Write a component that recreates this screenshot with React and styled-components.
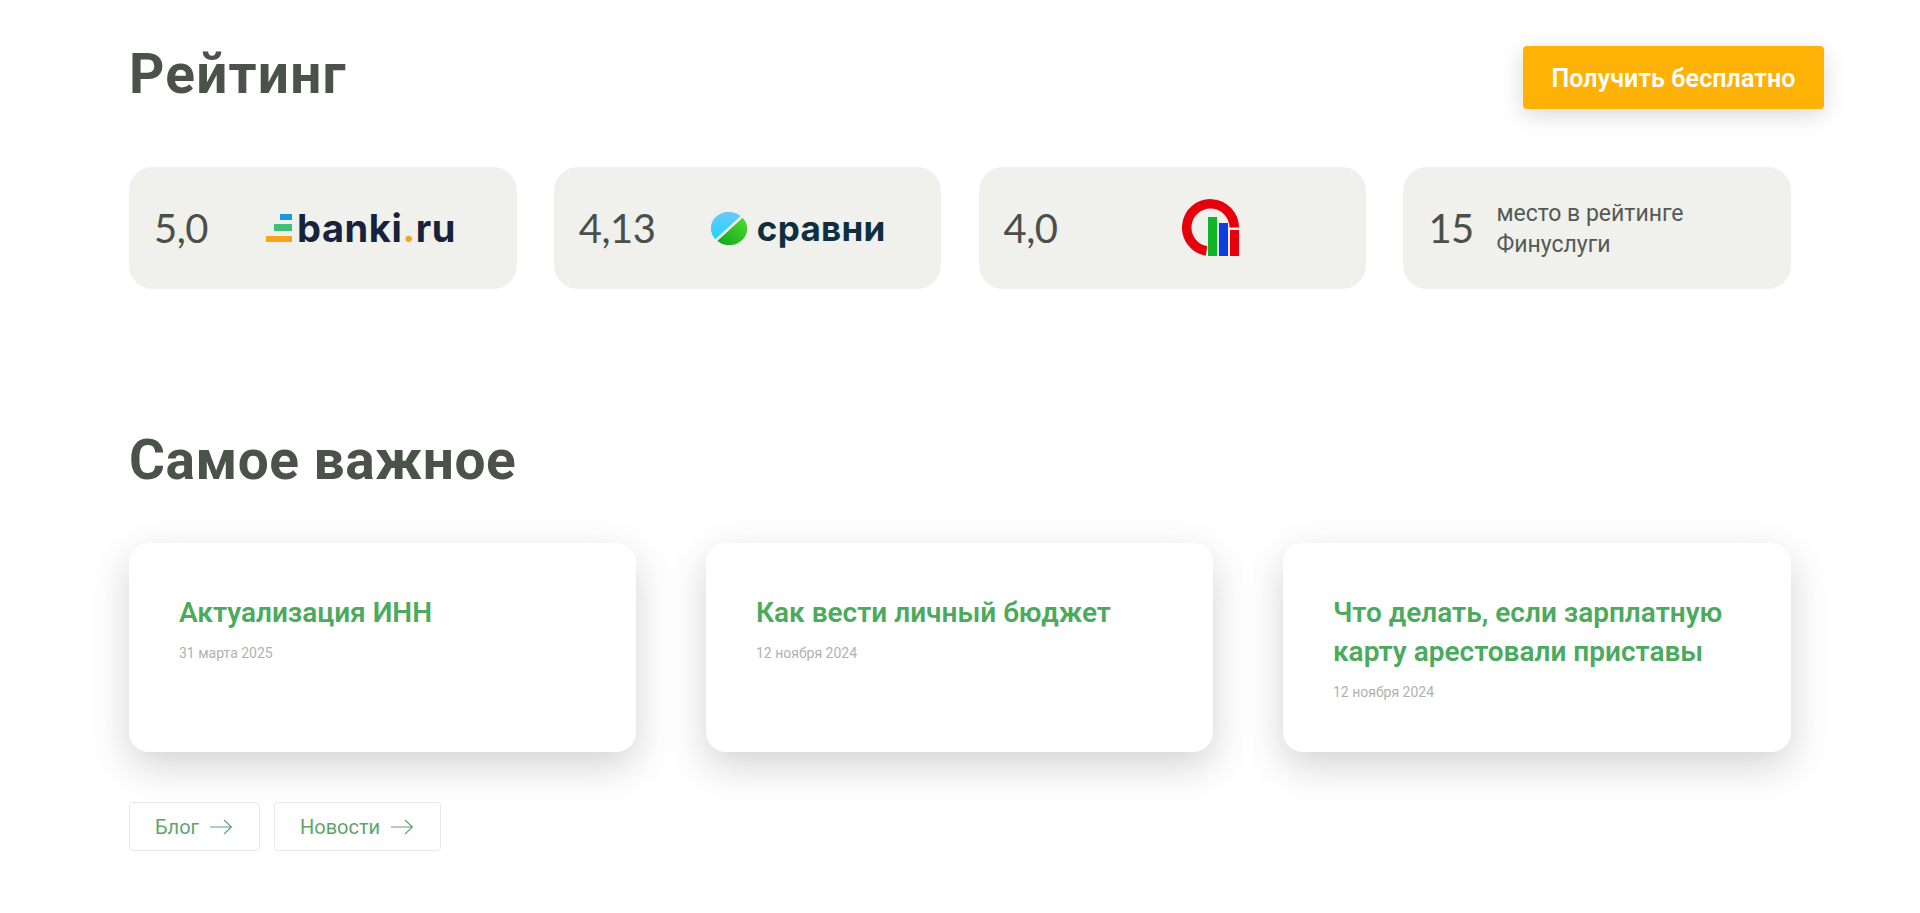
import React from "react";
import styled, { createGlobalStyle } from "styled-components";

const Global = createGlobalStyle`
  html, body {
    margin: 0;
    padding: 0;
    background: #fff;
    font-family: "Roboto", "Noto Sans", sans-serif;
  }
`;

const Page = styled.div`
  width: 1920px;
  height: 913px;
  padding: 46px 129px 0;
  box-sizing: border-box;
  overflow: hidden;
`;

const Header = styled.div`
  display: flex;
  align-items: flex-start;
  justify-content: space-between;
  height: 121px;
  margin-right: -33px;
`;

const Title = styled.h2`
  margin: 0;
  font-size: 55px;
  line-height: 56px;
  font-weight: 700;
  color: #4a5249;
  letter-spacing: ${(p) => p.$spacing}px;
`;

const GetButton = styled.a`
  display: flex;
  align-items: center;
  justify-content: center;
  width: 301px;
  height: 63px;
  padding-top: 2px;
  box-sizing: border-box;
  border-radius: 4px;
  background: #ffb206;
  box-shadow: 0 6px 22px rgba(60, 70, 60, 0.2);
  color: #fff;
  font-size: 25px;
  font-weight: 600;
  letter-spacing: 0.1px;
`;

const RatingRow = styled.div`
  display: grid;
  grid-template-columns: repeat(4, 1fr);
  gap: 37.2px;
  margin-bottom: 143px;
`;

const RatingCard = styled.div`
  display: flex;
  align-items: center;
  height: 122px;
  padding-left: 25px;
  border-radius: 24px;
  background: #f0f0ed;
  color: #4a5049;
`;

const Score = styled.div`
  font-family: "Lato", sans-serif;
  font-weight: 400;
  font-size: 40px;
  letter-spacing: -0.5px;
  width: ${(p) => p.$w}px;
  flex-shrink: 0;
`;

const RatingNote = styled.div`
  padding-top: 2px;
  font-size: 23px;
  line-height: 31px;
  color: #545a53;
`;

const BankiLogo = styled.div`
  display: flex;
  align-items: center;
  gap: 5px;
  font-family: "Inter", sans-serif;
  font-weight: 700;
  font-size: 38px;
  line-height: 28px;
  letter-spacing: 0.6px;
  color: #17233b;
`;

const Dot = styled.span`
  color: #f5a31f;
`;

const SravniLogo = styled.div`
  display: flex;
  align-items: center;
  gap: 10px;
  font-family: "Inter", sans-serif;
  font-weight: 700;
  font-size: 35px;
  line-height: 33px;
  letter-spacing: 0.3px;
  color: #0f2f40;
`;

const ArticleRow = styled.div`
  display: grid;
  grid-template-columns: 507px 507px 508px;
  gap: 70px;
  margin: 55px 0 50px;
`;

const ArticleCard = styled.a`
  display: block;
  height: 209px;
  padding: 50px 50px 0;
  box-sizing: border-box;
  border-radius: 20px;
  background: #fff;
  box-shadow: 0 14px 38px rgba(50, 60, 50, 0.22);
`;

const ArticleTitle = styled.div`
  font-size: 28px;
  line-height: 39px;
  font-weight: 600;
  color: #4caa5e;
`;

const ArticleDate = styled.div`
  margin-top: 11px;
  font-size: 14px;
  line-height: 20px;
  color: #b0b2af;
`;

const LinkRow = styled.div`
  display: flex;
  gap: 14px;
`;

const LinkButton = styled.a`
  display: flex;
  align-items: center;
  gap: 11px;
  height: 49px;
  padding: 0 27px 0 25px;
  box-sizing: border-box;
  border: 1px solid #e8e9e7;
  border-radius: 4px;
  color: #5da56c;
  font-size: 20px;
`;

const Arrow = () => (
  <svg width="22" height="16" viewBox="0 0 22 16" fill="none" stroke="#5da56c" strokeWidth="1.2">
    <path d="M0 8H21.5M14 1l7.5 7-7.5 7" />
  </svg>
);

const BankiBars = () => (
  <svg width="26" height="28" viewBox="0 0 26 28">
    <rect x="14" y="0" width="12" height="6" fill="#1f97dc" />
    <rect x="8" y="10" width="18" height="7" fill="#3fc078" />
    <rect x="0" y="22" width="26" height="6" fill="#f7a31c" />
  </svg>
);

const SravniMark = () => (
  <svg width="36" height="33" viewBox="0 0 36 36" preserveAspectRatio="none">
    <defs>
      <linearGradient id="sravniBlue" x1="0" y1="0" x2="0" y2="1">
        <stop offset="0" stopColor="#6cc8f5" />
        <stop offset="1" stopColor="#1cd6ff" />
      </linearGradient>
      <linearGradient id="sravniGreen" x1="1" y1="0" x2="0" y2="1">
        <stop offset="0" stopColor="#4fdc2c" />
        <stop offset="1" stopColor="#0ea522" />
      </linearGradient>
    </defs>
    <path d="M4.3 29.7A18 18 0 0 1 29.7 4.3Z" fill="url(#sravniBlue)" />
    <path d="M6.3 31.7L31.7 6.3A18 18 0 0 1 6.3 31.7Z" fill="url(#sravniGreen)" />
  </svg>
);

const GksMark = () => (
  <svg width="57" height="58" viewBox="0 0 57 58">
    <path d="M24.5 52A23.75 23.75 0 1 1 52.25 28.5" fill="none" stroke="#e6000e" strokeWidth="9.5" />
    <rect x="26" y="18" width="9" height="39" fill="#10b428" />
    <rect x="37" y="24" width="9" height="33" fill="#0a3ee0" />
    <rect x="48" y="31" width="9" height="26" fill="#e6000e" />
  </svg>
);

export default function App() {
  return (
    <Page>
      <Global />
      <Header>
        <Title $spacing={1.2}>Рейтинг</Title>
        <GetButton>Получить бесплатно</GetButton>
      </Header>
      <RatingRow>
        <RatingCard>
          <Score $w={112}>5,0</Score>
          <BankiLogo><BankiBars /><span>banki<Dot>.</Dot>ru</span></BankiLogo>
        </RatingCard>
        <RatingCard>
          <Score $w={132}>4,13</Score>
          <SravniLogo><SravniMark />сравни</SravniLogo>
        </RatingCard>
        <RatingCard>
          <Score $w={178}>4,0</Score>
          <GksMark />
        </RatingCard>
        <RatingCard>
          <Score $w={68}>15</Score>
          <RatingNote>место в рейтинге<br />Финуслуги</RatingNote>
        </RatingCard>
      </RatingRow>
      <Title $spacing={0.5}>Самое важное</Title>
      <ArticleRow>
        <ArticleCard>
          <ArticleTitle>Актуализация ИНН</ArticleTitle>
          <ArticleDate>31 марта 2025</ArticleDate>
        </ArticleCard>
        <ArticleCard>
          <ArticleTitle>Как вести личный бюджет</ArticleTitle>
          <ArticleDate>12 ноября 2024</ArticleDate>
        </ArticleCard>
        <ArticleCard>
          <ArticleTitle>Что делать, если зарплатную карту арестовали приставы</ArticleTitle>
          <ArticleDate>12 ноября 2024</ArticleDate>
        </ArticleCard>
      </ArticleRow>
      <LinkRow>
        <LinkButton>Блог <Arrow /></LinkButton>
        <LinkButton>Новости <Arrow /></LinkButton>
      </LinkRow>
    </Page>
  );
}
